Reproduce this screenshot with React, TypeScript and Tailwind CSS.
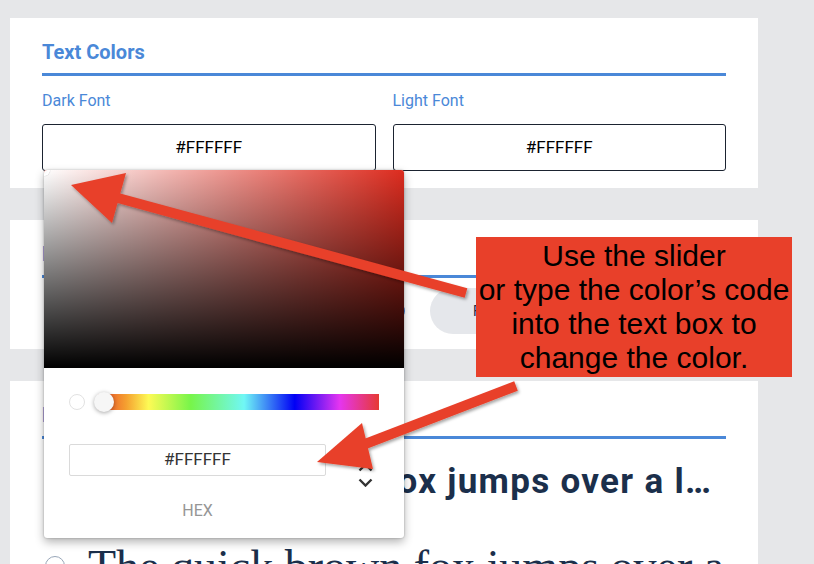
const blue = "text-[#4a88d8]";

const SectionTitle = ({ title }: { title: string }) => (
  <div className="border-b-[3px] border-[#4a88d8] pb-[9px]">
    <h2 className={`text-[20px] leading-6 font-bold ${blue}`}>{title}</h2>
  </div>
);

const ColorField = ({ label, value }: { label: string; value: string }) => (
  <div>
    <p className={`text-[16px] leading-5 ${blue}`}>{label}</p>
    <div className="mt-[13px] flex h-[47px] items-center justify-center rounded-[3px] border border-[#1b2330] text-[17px] text-black">
      {value}
    </div>
  </div>
);

const Chevron = ({ up }: { up?: boolean }) => (
  <svg width="15" height="9" viewBox="0 0 15 9" className="text-[#333]">
    <polyline
      points={up ? "1.5,7.5 7.5,1.5 13.5,7.5" : "1.5,1.5 7.5,7.5 13.5,1.5"}
      fill="none"
      stroke="currentColor"
      strokeWidth="2.4"
    />
  </svg>
);

const Picker = () => (
  <div className="absolute left-[44px] top-[170px] h-[368px] w-[360px] overflow-hidden rounded-[3px] bg-white shadow-[0_0_2px_rgba(0,0,0,0.3),0_4px_10px_rgba(0,0,0,0.3)]">
    {/* saturation */}
    <div className="relative h-[198px] bg-[#dd2c1f]">
      <div className="absolute inset-0 bg-gradient-to-r from-white to-transparent" />
      <div className="absolute inset-0 bg-gradient-to-b from-transparent to-black" />
      <div className="absolute -left-[6px] -top-[6px] h-3 w-3 rounded-full border-2 border-white shadow-[0_0_1px_rgba(0,0,0,0.4)]" />
    </div>

    <div className="px-[25px] pt-6">
      <div className="flex h-5 items-center">
        <div className="h-4 w-4 rounded-full border border-[#e2e2e2] bg-white" />
        <div className="relative ml-[13px] h-4 flex-1 bg-[linear-gradient(to_right,#e8402a_0%,#f5a030_10%,#fdfa55_18%,#77f54a_33%,#70f7f5_52%,#0000f5_70%,#e535f0_86%,#e63a33_100%)]">
          <div className="absolute -left-[4px] -top-[2px] h-5 w-5 rounded-full bg-[#f6f6f6] shadow-[0_1px_4px_rgba(0,0,0,0.35)]" />
        </div>
      </div>

      <div className="mt-8 flex">
        <div className="w-[257px]">
          <div className="flex h-8 items-center justify-center rounded-[2px] border border-[#dadada] text-[17px] text-[#333]">
            #FFFFFF
          </div>
          <p className="mt-[25px] text-center text-[16px] leading-5 text-[#969696]">HEX</p>
        </div>
        <div className="flex flex-1 flex-col items-center gap-[6px] pl-[26px] pt-[19px]">
          <Chevron up />
          <Chevron />
        </div>
      </div>
    </div>
  </div>
);

const Arrows = () => (
  <svg className="pointer-events-none absolute left-0 top-0" width="814" height="564" viewBox="0 0 814 564">
    <defs>
      <filter id="sh" x="-10%" y="-10%" width="120%" height="130%">
        <feDropShadow dx="1.5" dy="2" stdDeviation="1.5" floodColor="#000" floodOpacity="0.35" />
      </filter>
    </defs>
    <g fill="#e8402a" stroke="#e8402a" filter="url(#sh)">
      <line x1="118" y1="198" x2="466" y2="293" strokeWidth="10" />
      <polygon points="71,185 126,173 112,223" stroke="none" />
      <line x1="360" y1="446" x2="516" y2="386" strokeWidth="10" />
      <polygon points="317,462 362,423 373,469" stroke="none" />
    </g>
  </svg>
);

export default function App() {
  return (
    <div className="relative h-[564px] overflow-hidden bg-[#e6e7e9] px-[10px] pt-[18px] font-['Roboto',sans-serif]">
      <div className="w-[748px]">
        <div className="bg-white px-8 pb-[17px] pt-[22px]">
          <SectionTitle title="Text Colors" />
          <div className="mt-[15px] grid grid-cols-2 gap-x-[17px]">
            <ColorField label="Dark Font" value="#FFFFFF" />
            <ColorField label="Light Font" value="#FFFFFF" />
          </div>
        </div>

        <div className="mt-8 bg-white px-8 pb-[15px] pt-[22px]">
          <SectionTitle title="Button Colors" />
          <div className="mt-[10px] flex h-[46px] items-center">
            <div className="ml-[345px] h-[18px] w-[18px] rounded-full border-2 border-[#4a88d8]" />
            <div className="ml-[25px] flex h-[46px] w-[200px] items-center rounded-full bg-[#e5e7eb] pl-[43px] text-[14px] text-[#1b2f4b]">
              Font
            </div>
          </div>
        </div>

        <div className="mt-8 bg-white px-8 pt-[22px]">
          <SectionTitle title="Fonts" />
          <div className="mt-[23px] flex items-center">
            <div className="ml-[3px] h-5 w-5 shrink-0 rounded-full border-[1.5px] border-[#98a6b8]" />
            <p className="ml-[29px] w-[620px] truncate text-[35px] font-bold leading-10 tracking-[1.3px] text-[#1b2f4b]">
              The quick brown fox jumps over a lazy dog
            </p>
          </div>
          <div className="mt-[39px] flex items-start">
            <div className="ml-[3px] mt-[15px] h-5 w-5 shrink-0 rounded-full border-[1.5px] border-[#98a6b8]" />
            <p className="ml-[23px] w-[650px] font-['Liberation_Serif',serif] text-[46px] leading-[52px] text-[#1b2f4b]">
              The quick brown fox jumps over a
            </p>
          </div>
        </div>
      </div>

      <Picker />

      <div className="absolute left-[476px] top-[237px] flex h-[140px] w-[316px] flex-col items-center justify-center bg-[#e8402a] text-center font-['Liberation_Sans',Arial,sans-serif] text-[30px] leading-[34px] text-black">
        <span>Use the slider</span>
        <span className="whitespace-nowrap">or type the color’s code</span>
        <span>into the text box to</span>
        <span>change the color.</span>
      </div>

      <Arrows />
    </div>
  );
}
